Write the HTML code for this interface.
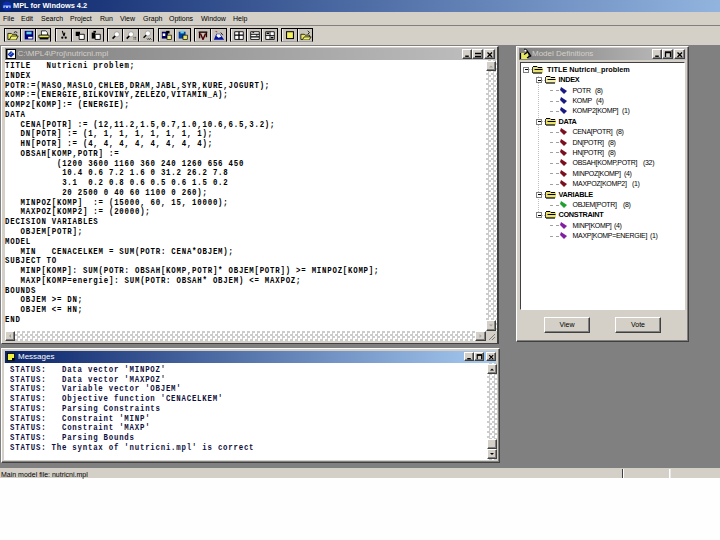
<!DOCTYPE html>
<html><head><meta charset="utf-8">
<style>
*{margin:0;padding:0;box-sizing:border-box}
html,body{width:720px;height:540px;overflow:hidden;background:#fefefe;position:relative}
div,span{position:absolute}
.ui{font-family:"Liberation Sans",sans-serif;font-size:8px;color:#000;white-space:pre}
.face{background:#d4d0c8}
#apptitle{left:0;top:0;width:720px;height:12px;background:linear-gradient(90deg,#0a246a 0px,#a6caf0 830px)}
#menubar{left:0;top:12px;width:720px;height:13px;background:#d4d0c8}
#toolbar{left:0;top:25px;width:720px;height:20px;background:#d4d0c8;border-top:1px solid #808080}
#mdi{left:0;top:45px;width:720px;height:423px;background:#808080}
#status{left:0;top:468px;width:720px;height:10px;background:#d4d0c8}
.tb{top:28px;height:14px;border-top:1px solid #000;border-left:1px solid #000;border-bottom:1px solid #a0a0a0;background:#c8c4bc;box-shadow:inset 1px 0 0 #f0f0f0}
.tb svg{position:absolute;left:1.5px;top:1px}
.win{background:#d4d0c8;border-top:1px solid #fff;border-left:1px solid #fff;border-right:1px solid #404040;border-bottom:1px solid #404040}
.ttl{height:12px}
.inact{background:linear-gradient(90deg,#808080,#c0c0c0)}
.act{background:linear-gradient(90deg,#0a246a,#a6caf0)}
.cbtn{top:1px;width:10px;height:9px;background:#d4d0c8;border-top:1px solid #fff;border-left:1px solid #fff;border-right:1px solid #404040;border-bottom:1px solid #404040}
.chk{background-color:#fff;background-image:linear-gradient(45deg,#c0c0c0 25%,transparent 25%,transparent 75%,#c0c0c0 75%),linear-gradient(45deg,#c0c0c0 25%,transparent 25%,transparent 75%,#c0c0c0 75%);background-size:5px 5px;background-position:0 0,2.5px 2.5px}
.sbtn{width:10px;height:10px;background:#d4d0c8;border-top:1px solid #fff;border-left:1px solid #fff;border-right:1px solid #404040;border-bottom:1px solid #404040}
.code{font-family:"Liberation Mono",monospace;font-weight:bold;font-size:8.67px;letter-spacing:0.92px;transform:scaleX(0.85);transform-origin:0 0;line-height:9.77px;white-space:pre;color:#000}
.msg{font-family:"Liberation Mono",monospace;font-weight:bold;font-size:8.67px;letter-spacing:0.92px;transform:scaleX(0.85);transform-origin:0 0;line-height:9.73px;white-space:pre;color:#101040}
.tree{font-family:"Liberation Sans",sans-serif;font-size:8px;white-space:pre;color:#000;letter-spacing:-0.3px}
.btn{background:#d4d0c8;border-top:1px solid #fff;border-left:1px solid #fff;border-right:1px solid #404040;border-bottom:1px solid #404040;font-family:"Liberation Sans",sans-serif;font-size:7px;text-align:center;line-height:14px}
</style></head><body>

<!-- App title -->
<div id="apptitle">
  <svg style="position:absolute;left:2px;top:1px" width="10" height="10" viewBox="0 0 10 10"><circle cx="5" cy="5" r="4.6" fill="#0c2cb0"/><path d="M2 7V5h2.5v2M5.5 7V5H8v2" fill="none" stroke="#b0c8ff" stroke-width="1.2"/></svg>
  <div class="ui" style="left:13px;top:0px;line-height:12px;color:#fff;font-weight:bold;font-size:7.4px">MPL for Windows 4.2</div>
</div>
<div id="menubar">
  <div class="ui" style="left:3px;top:1px;line-height:12px;font-size:7px">File</div>
  <div class="ui" style="left:21px;top:1px;line-height:12px;font-size:7px">Edit</div>
  <div class="ui" style="left:41px;top:1px;line-height:12px;font-size:7px">Search</div>
  <div class="ui" style="left:70px;top:1px;line-height:12px;font-size:7px">Project</div>
  <div class="ui" style="left:100px;top:1px;line-height:12px;font-size:7px">Run</div>
  <div class="ui" style="left:120px;top:1px;line-height:12px;font-size:7px">View</div>
  <div class="ui" style="left:143px;top:1px;line-height:12px;font-size:7px">Graph</div>
  <div class="ui" style="left:169px;top:1px;line-height:12px;font-size:7px">Options</div>
  <div class="ui" style="left:201px;top:1px;line-height:12px;font-size:7px">Window</div>
  <div class="ui" style="left:233px;top:1px;line-height:12px;font-size:7px">Help</div>
</div>
<div id="toolbar"></div>

<div class="tb" style="left:4px;width:16px"><svg width="12" height="10.3" viewBox="0 0 14 12"><path d="M1 4h4l1 1h5v6H1z" fill="#e8e860" stroke="#000" stroke-width="0.9"/><path d="M3 11l2-4h8l-2 4" fill="#f0f070" stroke="#000" stroke-width="0.9"/><path d="M8 3q2-2 4 0" fill="none" stroke="#000" stroke-width="1"/></svg></div>
<div class="tb" style="left:20px;width:15px"><svg width="12" height="10.3" viewBox="0 0 14 12"><rect x="2" y="1" width="10" height="10" fill="#000080"/><rect x="4" y="2" width="6" height="3" fill="#60d0e8"/><rect x="6" y="8" width="5" height="2" fill="#fff"/></svg></div>
<div class="tb" style="left:35px;width:16px;border-right:1px solid #000"><svg width="12" height="10.3" viewBox="0 0 14 12"><path d="M4 1h5l2 2v3H4z" fill="#fff" stroke="#000" stroke-width="0.9"/><path d="M1 6h12v3H1z" fill="#e8e850" stroke="#000" stroke-width="0.9"/><rect x="2" y="9" width="10" height="2" fill="#000"/></svg></div>
<div class="tb" style="left:55px;width:16px"><svg width="12" height="10.3" viewBox="0 0 14 12"><path d="M5 1l2 6M8 3l-1 4" stroke="#000" stroke-width="1.3" fill="none"/><circle cx="5" cy="9" r="1.3" fill="#000"/><circle cx="9" cy="9" r="1.3" fill="#000"/></svg></div>
<div class="tb" style="left:71px;width:16px"><svg width="12" height="10.3" viewBox="0 0 14 12"><path d="M2 2h5v5H2z" fill="#000"/><path d="M6 5h6v6H6z" fill="#fff" stroke="#000" stroke-width="1"/></svg></div>
<div class="tb" style="left:87px;width:17px;border-right:1px solid #000"><svg width="12" height="10.3" viewBox="0 0 14 12"><path d="M2 3h4v7H2z" fill="#000"/><path d="M6 5h6v6H6z" fill="#fff" stroke="#000" stroke-width="1"/><path d="M4 1h3v2H4z" fill="#000"/></svg></div>
<div class="tb" style="left:107px;width:15px"><svg width="12" height="10.3" viewBox="0 0 14 12"><circle cx="8" cy="5" r="3" fill="#fff" stroke="#888" stroke-width="0.8"/><path d="M6 7l-3 3" stroke="#000" stroke-width="2"/></svg></div>
<div class="tb" style="left:122px;width:16px"><svg width="12" height="10.3" viewBox="0 0 14 12"><circle cx="7" cy="5" r="3" fill="#fff" stroke="#888" stroke-width="0.8"/><path d="M5 7l-3 3" stroke="#000" stroke-width="2"/><rect x="10" y="8" width="1" height="1"/><rect x="12" y="8" width="1" height="1"/><rect x="10" y="10" width="1" height="1"/><rect x="12" y="10" width="1" height="1"/></svg></div>
<div class="tb" style="left:138px;width:16px;border-right:1px solid #000"><svg width="12" height="10.3" viewBox="0 0 14 12"><circle cx="8" cy="4" r="3" fill="#fff" stroke="#888" stroke-width="0.8"/><path d="M6 6l-3 3" stroke="#000" stroke-width="1.6"/><path d="M7 10l1 1 1-1 1 1 1-1 1 1" stroke="#000" stroke-width="1" fill="none"/></svg></div>
<div class="tb" style="left:158px;width:16px"><svg width="12" height="10.3" viewBox="0 0 14 12"><rect x="1" y="2" width="7" height="8" fill="#000060"/><rect x="2" y="4" width="3" height="3" fill="#fff"/><rect x="6" y="1" width="4" height="3" fill="#000"/><rect x="7" y="6" width="5" height="5" fill="#f0f080" stroke="#000" stroke-width="0.8"/></svg></div>
<div class="tb" style="left:174px;width:17px;border-right:1px solid #000"><svg width="12" height="10.3" viewBox="0 0 14 12"><rect x="2" y="2" width="8" height="8" fill="#0040a0"/><rect x="4" y="1" width="4" height="3" fill="#60d0e8"/><rect x="7" y="6" width="5" height="5" fill="#e8e860" stroke="#000" stroke-width="0.8"/></svg></div>
<div class="tb" style="left:194px;width:16px"><svg width="12" height="10.3" viewBox="0 0 14 12"><path d="M2 2.5h10" stroke="#200000" stroke-width="1.6"/><path d="M3 2.5v7M11 2.5v6" stroke="#200000" stroke-width="1.6"/><path d="M4 4l3 7 3-7" stroke="#500000" stroke-width="1.7" fill="none"/></svg></div>
<div class="tb" style="left:210px;width:17px;border-right:1px solid #000"><svg width="12" height="10.3" viewBox="0 0 14 12"><path d="M1 11.5l3-7h4l5 7z" fill="#0010a0"/><path d="M4.5 5h3.5l1.5 3-3 1-2.5-2z" fill="#fff"/><path d="M3 1.5l2 1" stroke="#a04040" stroke-width="1.2"/><path d="M9 3l2.5 3" stroke="#000" stroke-width="1"/></svg></div>
<div class="tb" style="left:230px;width:16px"><svg width="12" height="10.3" viewBox="0 0 14 12"><path d="M2 2h10v9H2z" fill="#fff" stroke="#000" stroke-width="1"/><path d="M7 2v9M2 6h10" stroke="#000" stroke-width="1.5"/></svg></div>
<div class="tb" style="left:246px;width:15px"><svg width="12" height="10.3" viewBox="0 0 14 12"><path d="M2 2h10v9H2z" fill="#fff" stroke="#000" stroke-width="1"/><path d="M2 5h10M2 8h10" stroke="#000" stroke-width="1.2"/><path d="M4 3h2M8 6h2" stroke="#000"/></svg></div>
<div class="tb" style="left:261px;width:17px;border-right:1px solid #000"><svg width="12" height="10.3" viewBox="0 0 14 12"><path d="M2 2h10v9H2z" fill="#fff" stroke="#000" stroke-width="1"/><path d="M7 2v9M2 6.5h10" stroke="#000" stroke-width="1"/><path d="M3 3h3v2H3zM8 8h3v2H8z" fill="#000"/></svg></div>
<div class="tb" style="left:281px;width:16px"><svg width="12" height="10.3" viewBox="0 0 14 12"><rect x="3" y="2" width="8" height="8" fill="#f0f060" stroke="#000" stroke-width="1.2"/></svg></div>
<div class="tb" style="left:297px;width:16px;border-right:1px solid #000"><svg width="12" height="10.3" viewBox="0 0 14 12"><path d="M1 5h4l1 1h5v5H1z" fill="#e8e860" stroke="#000" stroke-width="0.9"/><path d="M3 11l2-3h8l-2 3" fill="#f0f070" stroke="#000" stroke-width="0.9"/><path d="M9 1l2 2-2 2" fill="none" stroke="#000" stroke-width="1"/></svg></div>
<div id="mdi"></div>

<div style="left:1px;top:46px;width:498px;height:298px;background:#d4d0c8;border-left:1px solid #fff;border-top:1px solid #fff;border-right:2px solid #404040;border-bottom:1px solid #404040"></div>
<div style="left:5px;top:48px;width:491px;height:12px;background:linear-gradient(90deg,#808080,#c0c0c0)"></div>
<svg style="position:absolute;left:6px;top:49px" width="10" height="10" viewBox="0 0 10 10"><rect x="0.5" y="0.5" width="9" height="9" fill="#fff" stroke="#000"/><path d="M1 1v8" stroke="#000"/><path d="M1.5 5.5L5 2L8.5 5L5 8.5Z" fill="#1030a8"/><path d="M3.5 6L5 4.5L7 3" stroke="#90a8ff" stroke-width="1" fill="none"/><path d="M6 1.5h3" stroke="#fff" stroke-width="1"/></svg>
<div class="ui" style="left:17.5px;top:48px;line-height:12px;color:#d4d0c8;font-size:8px">C:\MPL4\Proj\nutricni.mpl</div>
<div style="left:462px;top:49px;width:10px;height:10px;background:#d4d0c8;border-top:1px solid #fff;border-left:1px solid #fff;border-right:1px solid #404040;border-bottom:1px solid #404040;box-shadow:inset -1px -1px 0 #808080"><svg style="position:absolute;left:0;top:0" width="8" height="8" viewBox="0 0 9 8"><path d="M2.5 6.5h4" stroke="#000" stroke-width="1.6"/></svg></div>
<div style="left:472px;top:49px;width:11px;height:10px;background:#d4d0c8;border-top:1px solid #fff;border-left:1px solid #fff;border-right:1px solid #404040;border-bottom:1px solid #404040;box-shadow:inset -1px -1px 0 #808080"><svg style="position:absolute;left:0;top:0" width="9" height="8" viewBox="0 0 9 8"><path d="M2 3.5h6M2 6.5h6" stroke="#000" stroke-width="1.3"/></svg></div>
<div style="left:484px;top:49px;width:11px;height:10px;background:#d4d0c8;border-top:1px solid #fff;border-left:1px solid #fff;border-right:1px solid #404040;border-bottom:1px solid #404040;box-shadow:inset -1px -1px 0 #808080"><svg style="position:absolute;left:0;top:0" width="9" height="8" viewBox="0 0 9 8"><path d="M2.5 2.5l4.5 4.5M7 2.5l-4.5 4.5" stroke="#000" stroke-width="1.4"/></svg></div>
<div style="left:5px;top:60px;width:481px;height:271px;background:#fff"></div>
<div style="left:486px;top:60px;width:11px;height:271px;background:repeating-conic-gradient(#cccccc 0% 25%,#ffffff 0% 50%) 0 0/5px 5px"></div>
<div style="left:486px;top:61px;width:10px;height:10px;background:#d4d0c8;border-top:1px solid #fff;border-left:1px solid #fff;border-right:1px solid #404040;border-bottom:1px solid #404040;box-shadow:inset -1px -1px 0 #808080"><svg style="position:absolute;left:0;top:0" width="8" height="8" viewBox="0 0 8 8"><path d="M2 5.5L4 3.5L6 5.5Z" fill="#a0a0a0"/></svg></div>
<div style="left:486px;top:320px;width:10px;height:11px;background:#d4d0c8;border-top:1px solid #fff;border-left:1px solid #fff;border-right:1px solid #404040;border-bottom:1px solid #404040;box-shadow:inset -1px -1px 0 #808080"><svg style="position:absolute;left:0;top:0" width="8" height="9" viewBox="0 0 8 8"><path d="M2 3L4 5L6 3Z" fill="#a0a0a0"/></svg></div>
<div style="left:5px;top:331px;width:481px;height:10px;background:repeating-conic-gradient(#cccccc 0% 25%,#ffffff 0% 50%) 0 0/5px 5px"></div>
<div style="left:5px;top:331px;width:10px;height:10px;background:#d4d0c8;border-top:1px solid #fff;border-left:1px solid #fff;border-right:1px solid #404040;border-bottom:1px solid #404040;box-shadow:inset -1px -1px 0 #808080"><svg style="position:absolute;left:0;top:0" width="8" height="8" viewBox="0 0 8 8"><path d="M5 2L3 4L5 6Z" fill="#a0a0a0"/></svg></div>
<div style="left:475px;top:331px;width:11px;height:10px;background:#d4d0c8;border-top:1px solid #fff;border-left:1px solid #fff;border-right:1px solid #404040;border-bottom:1px solid #404040;box-shadow:inset -1px -1px 0 #808080"><svg style="position:absolute;left:0;top:0" width="9" height="8" viewBox="0 0 8 8"><path d="M3 2L5 4L3 6Z" fill="#a0a0a0"/></svg></div>
<div style="left:486px;top:331px;width:11px;height:10px;background:#d4d0c8"></div>
<svg style="position:absolute;left:487px;top:332px" width="9" height="9" viewBox="0 0 9 9"><path d="M8 2L2 8M8 5L5 8" stroke="#808080" stroke-width="1"/></svg>
<div style="left:516px;top:46px;width:173px;height:296px;background:#d4d0c8;border-left:1px solid #fff;border-top:1px solid #fff;border-right:1px solid #404040;border-bottom:1px solid #404040;box-shadow:inset -1px -1px 0 #808080"></div>
<div style="left:519px;top:48px;width:167px;height:12px;background:linear-gradient(90deg,#808080,#c0c0c0)"></div>
<svg style="position:absolute;left:519px;top:48px" width="13" height="12" viewBox="0 0 13 12"><path d="M2 5h7v6H2z" fill="#e8e860"/><path d="M1.5 5v6" stroke="#000" stroke-width="1.2"/><path d="M5 6.5l3-2M7 1.5l5 7M8 10l3-2" stroke="#000" stroke-width="1.3"/><circle cx="6.5" cy="2.5" r="1" fill="#fff"/><circle cx="6" cy="1.2" r="0.8" fill="#000"/></svg>
<div class="ui" style="left:532px;top:48px;line-height:12px;color:#d4d0c8;font-size:8px">Model Definitions</div>
<div style="left:652px;top:49px;width:10px;height:10px;background:#d4d0c8;border-top:1px solid #fff;border-left:1px solid #fff;border-right:1px solid #404040;border-bottom:1px solid #404040;box-shadow:inset -1px -1px 0 #808080"><svg style="position:absolute;left:0;top:0" width="8" height="8" viewBox="0 0 9 8"><path d="M2.5 6.5h4" stroke="#000" stroke-width="1.6"/></svg></div>
<div style="left:662px;top:49px;width:11px;height:10px;background:#d4d0c8;border-top:1px solid #fff;border-left:1px solid #fff;border-right:1px solid #404040;border-bottom:1px solid #404040;box-shadow:inset -1px -1px 0 #808080"><svg style="position:absolute;left:0;top:0" width="9" height="8" viewBox="0 0 9 8"><path d="M2.5 7V2.5h5V7" fill="none" stroke="#000" stroke-width="1.3"/><path d="M2 2.2h6" stroke="#000" stroke-width="1.6"/></svg></div>
<div style="left:674px;top:49px;width:11px;height:10px;background:#d4d0c8;border-top:1px solid #fff;border-left:1px solid #fff;border-right:1px solid #404040;border-bottom:1px solid #404040;box-shadow:inset -1px -1px 0 #808080"><svg style="position:absolute;left:0;top:0" width="9" height="8" viewBox="0 0 9 8"><path d="M2.5 2.5l4.5 4.5M7 2.5l-4.5 4.5" stroke="#000" stroke-width="1.4"/></svg></div>
<div style="left:520px;top:62px;width:165px;height:248px;background:#fff;border-top:1px solid #404040;border-left:1px solid #404040;border-right:1px solid #fff;border-bottom:1px solid #fff"></div>
<div class="btn" style="left:544px;top:317px;width:46px;height:16px;background:#d4d0c8;border-top:1px solid #fff;border-left:1px solid #fff;border-right:1px solid #404040;border-bottom:1px solid #404040;box-shadow:inset -1px -1px 0 #808080;line-height:14px">View</div>
<div class="btn" style="left:615px;top:317px;width:46px;height:16px;background:#d4d0c8;border-top:1px solid #fff;border-left:1px solid #fff;border-right:1px solid #404040;border-bottom:1px solid #404040;box-shadow:inset -1px -1px 0 #808080;line-height:14px">Vote</div>
<div style="left:1px;top:348px;width:499px;height:115px;background:#d4d0c8;border-left:1px solid #fff;border-top:1px solid #fff;border-right:1px solid #404040;border-bottom:1px solid #404040;box-shadow:inset -1px -1px 0 #808080"></div>
<div style="left:5px;top:351px;width:491px;height:12px;background:linear-gradient(90deg,#0a246a,#a6caf0)"></div>
<svg style="position:absolute;left:7px;top:353px" width="8" height="8" viewBox="0 0 8 8"><rect x="0.5" y="0.5" width="7" height="7" fill="#f0f040" stroke="#000" stroke-width="0.8"/><rect x="5" y="5" width="2.5" height="2.5" fill="#000"/></svg>
<div class="ui" style="left:18px;top:351px;line-height:12px;color:#fff;font-size:8px">Messages</div>
<div style="left:464px;top:352px;width:10px;height:9px;background:#d4d0c8;border-top:1px solid #fff;border-left:1px solid #fff;border-right:1px solid #404040;border-bottom:1px solid #404040;box-shadow:inset -1px -1px 0 #808080"><svg style="position:absolute;left:0;top:0" width="8" height="7" viewBox="0 0 9 8"><path d="M2.5 6.5h4" stroke="#000" stroke-width="1.6"/></svg></div>
<div style="left:474px;top:352px;width:10px;height:9px;background:#d4d0c8;border-top:1px solid #fff;border-left:1px solid #fff;border-right:1px solid #404040;border-bottom:1px solid #404040;box-shadow:inset -1px -1px 0 #808080"><svg style="position:absolute;left:0;top:0" width="8" height="7" viewBox="0 0 9 8"><path d="M2.5 7V2.5h5V7" fill="none" stroke="#000" stroke-width="1.3"/><path d="M2 2.2h6" stroke="#000" stroke-width="1.6"/></svg></div>
<div style="left:486px;top:352px;width:10px;height:9px;background:#d4d0c8;border-top:1px solid #fff;border-left:1px solid #fff;border-right:1px solid #404040;border-bottom:1px solid #404040;box-shadow:inset -1px -1px 0 #808080"><svg style="position:absolute;left:0;top:0" width="8" height="7" viewBox="0 0 9 8"><path d="M2.5 2.5l4.5 4.5M7 2.5l-4.5 4.5" stroke="#000" stroke-width="1.4"/></svg></div>
<div style="left:4px;top:363px;width:483px;height:97px;background:#fff"></div>
<div style="left:487px;top:363px;width:10px;height:97px;background:repeating-conic-gradient(#cccccc 0% 25%,#ffffff 0% 50%) 0 0/5px 5px"></div>
<div style="left:487px;top:364px;width:10px;height:10px;background:#d4d0c8;border-top:1px solid #fff;border-left:1px solid #fff;border-right:1px solid #404040;border-bottom:1px solid #404040;box-shadow:inset -1px -1px 0 #808080"><svg style="position:absolute;left:0;top:0" width="8" height="8" viewBox="0 0 8 8"><path d="M2 5.5L4 3.5L6 5.5Z" fill="#000"/></svg></div>
<div style="left:487px;top:439px;width:10px;height:10px;background:#d4d0c8;border-top:1px solid #fff;border-left:1px solid #fff;border-right:1px solid #404040;border-bottom:1px solid #404040;box-shadow:inset -1px -1px 0 #808080"><svg style="position:absolute;left:0;top:0" width="8" height="8" viewBox="0 0 8 8"></svg></div>
<div style="left:487px;top:449px;width:10px;height:10px;background:#d4d0c8;border-top:1px solid #fff;border-left:1px solid #fff;border-right:1px solid #404040;border-bottom:1px solid #404040;box-shadow:inset -1px -1px 0 #808080"><svg style="position:absolute;left:0;top:0" width="8" height="8" viewBox="0 0 8 8"><path d="M2 3L4 5L6 3Z" fill="#000"/></svg></div>
<div class="code" id="code" style="left:5px;top:62px">TITLE   Nutricni problem;
INDEX
POTR:=(MASO,MASLO,CHLEB,DRAM,JABL,SYR,KURE,JOGURT);
KOMP:=(ENERGIE,BILKOVINY,ZELEZO,VITAMIN_A);
KOMP2[KOMP]:= (ENERGIE);
DATA
   CENA[POTR] := (12,11.2,1.5,0.7,1.0,10.6,6.5,3.2);
   DN[POTR] := (1, 1, 1, 1, 1, 1, 1, 1);
   HN[POTR] := (4, 4, 4, 4, 4, 4, 4, 4);
   OBSAH[KOMP,POTR] :=
          (1200 3600 1160 360 240 1260 656 450
           10.4 0.6 7.2 1.6 0 31.2 26.2 7.8
           3.1  0.2 0.8 0.6 0.5 0.6 1.5 0.2
           20 2500 0 40 60 1100 0 260);
   MINPOZ[KOMP]  := (15000, 60, 15, 10000);
   MAXPOZ[KOMP2] := (20000);
DECISION VARIABLES
   OBJEM[POTR];
MODEL
   MIN   CENACELKEM = SUM(POTR: CENA*OBJEM);
SUBJECT TO
   MINP[KOMP]: SUM(POTR: OBSAH[KOMP,POTR]* OBJEM[POTR]) &gt;= MINPOZ[KOMP];
   MAXP[KOMP=energie]: SUM(POTR: OBSAH* OBJEM) &lt;= MAXPOZ;
BOUNDS
   OBJEM &gt;= DN;
   OBJEM &lt;= HN;
END</div>
<div class="msg" id="msgs" style="left:10px;top:366px">STATUS:   Data vector &#x27;MINPOZ&#x27;
STATUS:   Data vector &#x27;MAXPOZ&#x27;
STATUS:   Variable vector &#x27;OBJEM&#x27;
STATUS:   Objective function &#x27;CENACELKEM&#x27;
STATUS:   Parsing Constraints
STATUS:   Constraint &#x27;MINP&#x27;
STATUS:   Constraint &#x27;MAXP&#x27;
STATUS:   Parsing Bounds
STATUS: The syntax of &#x27;nutricni.mpl&#x27; is correct</div>
<div style="left:538px;top:76px;width:1px;height:140px;border-left:1px dotted #c0c0c0"></div>
<div style="left:523px;top:66.8px;width:6px;height:6px;border:1px solid #808080;background:#fff"><div style="left:1px;top:1.5px;width:3px;height:1px;background:#000"></div></div>
<div style="left:529px;top:69.2px;width:3px;height:1px;border-top:1px dotted #c0c0c0"></div>
<svg style="position:absolute;left:532px;top:64.8px" width="12" height="9" viewBox="0 0 12 9"><path d="M1 2h10v6H1z" fill="#e8e070"/><path d="M1 1.5h4l1 1h4" fill="none" stroke="#000" stroke-width="1"/><path d="M2.5 4.5h8" stroke="#000" stroke-width="1"/><path d="M1 8h9" stroke="#000" stroke-width="1.2"/><path d="M0.5 2v6" stroke="#000" stroke-width="0.8"/></svg>
<div class="tree" style="left:547px;top:63.8px;line-height:11px;font-weight:bold;font-size:7.3px;letter-spacing:0">TITLE Nutricni_problem</div>
<div style="left:536px;top:77.2px;width:6px;height:6px;border:1px solid #808080;background:#fff"><div style="left:1px;top:1.5px;width:3px;height:1px;background:#000"></div></div>
<div style="left:542px;top:79.7px;width:3px;height:1px;border-top:1px dotted #c0c0c0"></div>
<svg style="position:absolute;left:545px;top:75.2px" width="12" height="9" viewBox="0 0 12 9"><path d="M1 2h10v6H1z" fill="#f4f0b0"/><path d="M1 1.5h4l1 1h4" fill="none" stroke="#000" stroke-width="1"/><path d="M2.5 4.5h8" stroke="#000" stroke-width="1"/><path d="M1 8h9" stroke="#000" stroke-width="1.2"/><path d="M0.5 2v6" stroke="#000" stroke-width="0.8"/></svg>
<div class="tree" style="left:558.5px;top:74.2px;line-height:11px;font-weight:bold;font-size:7.3px">INDEX</div>
<div style="left:550px;top:90.0px;width:9px;height:1px;border-top:1px dashed #a0a0a0"></div>
<svg style="position:absolute;left:560px;top:86.5px" width="7" height="7" viewBox="0 0 7 7"><path d="M1 0L7 4L4 7L0 3Z" fill="#1a1a80"/></svg>
<div class="tree" style="left:572.5px;top:84.5px;line-height:11px;font-size:7px">POTR</div>
<div class="tree" style="left:595px;top:84.5px;line-height:11px;font-size:7px">(8)</div>
<div style="left:550px;top:100.5px;width:9px;height:1px;border-top:1px dashed #a0a0a0"></div>
<svg style="position:absolute;left:560px;top:97.0px" width="7" height="7" viewBox="0 0 7 7"><path d="M1 0L7 4L4 7L0 3Z" fill="#1a1a80"/></svg>
<div class="tree" style="left:572.5px;top:95.0px;line-height:11px;font-size:7px">KOMP</div>
<div class="tree" style="left:596px;top:95.0px;line-height:11px;font-size:7px">(4)</div>
<div style="left:550px;top:110.8px;width:9px;height:1px;border-top:1px dashed #a0a0a0"></div>
<svg style="position:absolute;left:560px;top:107.3px" width="7" height="7" viewBox="0 0 7 7"><path d="M1 0L7 4L4 7L0 3Z" fill="#1a1a80"/></svg>
<div class="tree" style="left:572.5px;top:105.3px;line-height:11px;font-size:7px">KOMP2[KOMP]</div>
<div class="tree" style="left:622px;top:105.3px;line-height:11px;font-size:7px">(1)</div>
<div style="left:536px;top:118.8px;width:6px;height:6px;border:1px solid #808080;background:#fff"><div style="left:1px;top:1.5px;width:3px;height:1px;background:#000"></div></div>
<div style="left:542px;top:121.2px;width:3px;height:1px;border-top:1px dotted #c0c0c0"></div>
<svg style="position:absolute;left:545px;top:116.8px" width="12" height="9" viewBox="0 0 12 9"><path d="M1 2h10v6H1z" fill="#e8e070"/><path d="M1 1.5h4l1 1h4" fill="none" stroke="#000" stroke-width="1"/><path d="M2.5 4.5h8" stroke="#000" stroke-width="1"/><path d="M1 8h9" stroke="#000" stroke-width="1.2"/><path d="M0.5 2v6" stroke="#000" stroke-width="0.8"/></svg>
<div class="tree" style="left:558.5px;top:115.8px;line-height:11px;font-weight:bold;font-size:7.3px">DATA</div>
<div style="left:550px;top:131.7px;width:9px;height:1px;border-top:1px dashed #a0a0a0"></div>
<svg style="position:absolute;left:560px;top:128.2px" width="7" height="7" viewBox="0 0 7 7"><path d="M1 0L7 4L4 7L0 3Z" fill="#7a1020"/></svg>
<div class="tree" style="left:572.5px;top:126.2px;line-height:11px;font-size:7px">CENA[POTR]</div>
<div class="tree" style="left:616px;top:126.2px;line-height:11px;font-size:7px">(8)</div>
<div style="left:550px;top:142.1px;width:9px;height:1px;border-top:1px dashed #a0a0a0"></div>
<svg style="position:absolute;left:560px;top:138.6px" width="7" height="7" viewBox="0 0 7 7"><path d="M1 0L7 4L4 7L0 3Z" fill="#7a1020"/></svg>
<div class="tree" style="left:572.5px;top:136.6px;line-height:11px;font-size:7px">DN[POTR]</div>
<div class="tree" style="left:608px;top:136.6px;line-height:11px;font-size:7px">(8)</div>
<div style="left:550px;top:152.4px;width:9px;height:1px;border-top:1px dashed #a0a0a0"></div>
<svg style="position:absolute;left:560px;top:148.9px" width="7" height="7" viewBox="0 0 7 7"><path d="M1 0L7 4L4 7L0 3Z" fill="#7a1020"/></svg>
<div class="tree" style="left:572.5px;top:146.9px;line-height:11px;font-size:7px">HN[POTR]</div>
<div class="tree" style="left:608px;top:146.9px;line-height:11px;font-size:7px">(8)</div>
<div style="left:550px;top:162.9px;width:9px;height:1px;border-top:1px dashed #a0a0a0"></div>
<svg style="position:absolute;left:560px;top:159.4px" width="7" height="7" viewBox="0 0 7 7"><path d="M1 0L7 4L4 7L0 3Z" fill="#7a1020"/></svg>
<div class="tree" style="left:572.5px;top:157.4px;line-height:11px;font-size:7px">OBSAH[KOMP,POTR]</div>
<div class="tree" style="left:643px;top:157.4px;line-height:11px;font-size:7px">(32)</div>
<div style="left:550px;top:173.2px;width:9px;height:1px;border-top:1px dashed #a0a0a0"></div>
<svg style="position:absolute;left:560px;top:169.8px" width="7" height="7" viewBox="0 0 7 7"><path d="M1 0L7 4L4 7L0 3Z" fill="#7a1020"/></svg>
<div class="tree" style="left:572.5px;top:167.8px;line-height:11px;font-size:7px">MINPOZ[KOMP]</div>
<div class="tree" style="left:624px;top:167.8px;line-height:11px;font-size:7px">(4)</div>
<div style="left:550px;top:183.7px;width:9px;height:1px;border-top:1px dashed #a0a0a0"></div>
<svg style="position:absolute;left:560px;top:180.2px" width="7" height="7" viewBox="0 0 7 7"><path d="M1 0L7 4L4 7L0 3Z" fill="#7a1020"/></svg>
<div class="tree" style="left:572.5px;top:178.2px;line-height:11px;font-size:7px">MAXPOZ[KOMP2]</div>
<div class="tree" style="left:632px;top:178.2px;line-height:11px;font-size:7px">(1)</div>
<div style="left:536px;top:191.6px;width:6px;height:6px;border:1px solid #808080;background:#fff"><div style="left:1px;top:1.5px;width:3px;height:1px;background:#000"></div></div>
<div style="left:542px;top:194.1px;width:3px;height:1px;border-top:1px dotted #c0c0c0"></div>
<svg style="position:absolute;left:545px;top:189.6px" width="12" height="9" viewBox="0 0 12 9"><path d="M1 2h10v6H1z" fill="#e8e070"/><path d="M1 1.5h4l1 1h4" fill="none" stroke="#000" stroke-width="1"/><path d="M2.5 4.5h8" stroke="#000" stroke-width="1"/><path d="M1 8h9" stroke="#000" stroke-width="1.2"/><path d="M0.5 2v6" stroke="#000" stroke-width="0.8"/></svg>
<div class="tree" style="left:558.5px;top:188.6px;line-height:11px;font-weight:bold;font-size:7.3px">VARIABLE</div>
<div style="left:550px;top:204.5px;width:9px;height:1px;border-top:1px dashed #a0a0a0"></div>
<svg style="position:absolute;left:560px;top:201.0px" width="7" height="7" viewBox="0 0 7 7"><path d="M1 0L7 4L4 7L0 3Z" fill="#20a030"/></svg>
<div class="tree" style="left:572.5px;top:199.0px;line-height:11px;font-size:7px">OBJEM[POTR]</div>
<div class="tree" style="left:623px;top:199.0px;line-height:11px;font-size:7px">(8)</div>
<div style="left:536px;top:212.3px;width:6px;height:6px;border:1px solid #808080;background:#fff"><div style="left:1px;top:1.5px;width:3px;height:1px;background:#000"></div></div>
<div style="left:542px;top:214.8px;width:3px;height:1px;border-top:1px dotted #c0c0c0"></div>
<svg style="position:absolute;left:545px;top:210.3px" width="12" height="9" viewBox="0 0 12 9"><path d="M1 2h10v6H1z" fill="#e8e070"/><path d="M1 1.5h4l1 1h4" fill="none" stroke="#000" stroke-width="1"/><path d="M2.5 4.5h8" stroke="#000" stroke-width="1"/><path d="M1 8h9" stroke="#000" stroke-width="1.2"/><path d="M0.5 2v6" stroke="#000" stroke-width="0.8"/></svg>
<div class="tree" style="left:558.5px;top:209.3px;line-height:11px;font-weight:bold;font-size:7.3px">CONSTRAINT</div>
<div style="left:550px;top:225.2px;width:9px;height:1px;border-top:1px dashed #a0a0a0"></div>
<svg style="position:absolute;left:560px;top:221.8px" width="7" height="7" viewBox="0 0 7 7"><path d="M1 0L7 4L4 7L0 3Z" fill="#8020a0"/></svg>
<div class="tree" style="left:572.5px;top:219.8px;line-height:11px;font-size:7px">MINP[KOMP]</div>
<div class="tree" style="left:614px;top:219.8px;line-height:11px;font-size:7px">(4)</div>
<div style="left:550px;top:235.7px;width:9px;height:1px;border-top:1px dashed #a0a0a0"></div>
<svg style="position:absolute;left:560px;top:232.2px" width="7" height="7" viewBox="0 0 7 7"><path d="M1 0L7 4L4 7L0 3Z" fill="#8020a0"/></svg>
<div class="tree" style="left:572.5px;top:230.2px;line-height:11px;font-size:7px">MAXP[KOMP=ENERGIE]</div>
<div class="tree" style="left:650px;top:230.2px;line-height:11px;font-size:7px">(1)</div>
<div id="status">
  <div class="ui" style="left:1px;top:0.5px;line-height:11px;font-size:7px">Main model file: nutricni.mpl</div>
  <div style="left:622px;top:1px;width:2px;height:9px;border-left:1px solid #404040;border-right:1px solid #fff"></div>
  <div style="left:669px;top:1px;width:2px;height:9px;border-left:1px solid #fff;border-right:1px solid #e8e8e8"></div>
</div>

</body></html>
